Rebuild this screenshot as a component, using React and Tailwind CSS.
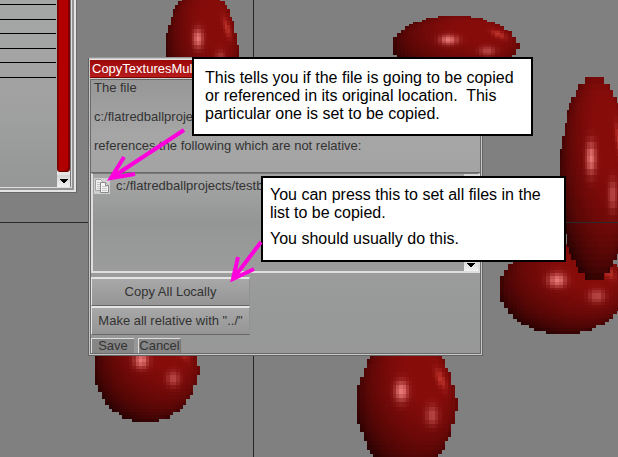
import React from "react";

const TEXELS = 31;

const glow = (x, y, cx, cy, sx, sy, tilt = 0) => {
  const dx = x - cx;
  const dy = y - cy;
  const a = dx * Math.cos(tilt) + dy * Math.sin(tilt);
  const b = -dx * Math.sin(tilt) + dy * Math.cos(tilt);
  return Math.exp(-(a * a) / (2 * sx * sx) - (b * b) / (2 * sy * sy));
};

const mix = (from, to, t) => from.map((c, i) => c + (to[i] - c) * t);

// Low resolution ball sprite: one coloured square per texel.
const sprite = [];
for (let row = 0; row < TEXELS; row++) {
  for (let col = 0; col < TEXELS; col++) {
    const u = (col + 0.5) / TEXELS;
    const v = (row + 0.5) / TEXELS;
    const x = (u - 0.485) / 0.485;
    const y = (v - 0.5) * 2;
    const r2 = x * x + y * y;
    const bump = col === TEXELS - 1 && row >= 14 && row <= 16;
    if (r2 > 1.01 && !bump) continue;
    const z = Math.sqrt(Math.max(0, 1 - r2));
    const light = Math.max(0, Math.min(1, 0.3 * x - 0.36 * y + 0.55 * z + 0.34));
    let c = mix([44, 2, 2], [134, 12, 10], light);
    c = mix(c, [188, 50, 42], glow(u, v, 0.83, 0.31, 0.06, 0.025, 1.05));
    c = mix(c, [184, 72, 70], glow(u, v, 0.745, 0.58, 0.042, 0.05));
    c = mix(c, [232, 120, 118], glow(u, v, 0.44, 0.4, 0.046, 0.052));
    sprite.push({ col, row, fill: `rgb(${c.map(Math.round).join(",")})` });
  }
}

const balls = [
  { x: 166, y: -11, w: 73, h: 124 },
  { x: 393, y: 16, w: 127, h: 60 },
  { x: 500, y: 244, w: 130, h: 90 },
  { x: 560, y: 77, w: 71, h: 203 },
  { x: 95, y: 319, w: 105, h: 103 },
  { x: 357, y: 338, w: 101, h: 133 },
];

function Scene() {
  return (
    <svg className="absolute inset-0 h-full w-full" shapeRendering="crispEdges" aria-hidden="true">
      {balls.map((b) => (
        <svg key={`${b.x}-${b.y}`} x={b.x} y={b.y} width={b.w} height={b.h} viewBox={`0 0 ${TEXELS} ${TEXELS}`} preserveAspectRatio="none">
          {sprite.map((t) => (
            <rect key={`${t.col}-${t.row}`} x={t.col} y={t.row} width="1" height="1" fill={t.fill} />
          ))}
        </svg>
      ))}
      <rect x="253" y="0" width="1" height="100%" fill="#262626" />
      <rect x="0" y="222" width="100%" height="1" fill="#2b2b2b" />
    </svg>
  );
}

function ArrowButton({ label, up = false }) {
  return (
    <button type="button" aria-label={label} className="flex h-3 w-full items-center justify-center bg-linear-to-b from-[#d4d4d4] to-[#f2f2f2]">
      <svg width="8" height="4" viewBox="0 0 8 4" shapeRendering="crispEdges" fill="#000">
        {up ? <path d="M3 0h2v1h1v1h1v1h1v1H0V3h1V2h1V1h1z" /> : <path d="M0 0h8v1H7v1H6v1H5v1H3V3H2V2H1V1H0z" />}
      </svg>
    </button>
  );
}

function PropertyWindow() {
  return (
    <section aria-label="Properties" className="absolute top-0 left-0 border-r border-b border-[#686868]">
      <div className="border-r-2 border-b-2 border-[#e4e4e4]">
        <div className="border-r-2 border-b-2 border-[#939393]">
          <div className="flex h-[188px] border-r border-b border-[#dedede] bg-linear-to-b from-[#a4a6a5] via-[#a2a2a2] to-[#949796]">
            <div className="w-14 pt-1">
              <div className="h-[15px] border-t border-black" />
              <div className="h-[14px] border-t border-black" />
              <div className="h-[15px] border-t border-black" />
              <div className="h-[14px] border-t border-black" />
              <div className="h-[15px] border-t border-black" />
              <div className="border-t border-black" />
            </div>
            <div className="ml-px flex w-[13px] flex-col">
              <div className="bg-[#e4e4e4]">
                <div className="h-[172px] rounded-b bg-linear-to-r from-[#690000] via-[#b40000] via-25% to-[#780000] shadow-[inset_0_-1px_0_#690000]">
                  <div className="mx-auto h-[170px] w-[9px] rounded-b bg-[#b20000]" />
                </div>
                <div className="h-[3px]" />
              </div>
              <ArrowButton label="Scroll properties down" />
            </div>
            <div className="w-px bg-[#777]" />
          </div>
        </div>
      </div>
    </section>
  );
}

function CopyIcon() {
  return (
    <svg width="16" height="16" viewBox="0 0 16 16" aria-hidden="true">
      <rect width="16" height="16" fill="#cfcfcf" />
      <path d="M1.500 1.500h5l2 2v9h-7z" fill="#ededed" stroke="#a2a2a2" />
      <path d="M3 4.500h3M3 6.500h3M3 8.500h3M3 10.500h3" stroke="#c4c4c4" />
      <path d="M6.500 4.500h5l3 3v7h-8z" fill="#f6f6f6" stroke="#8a8a8a" />
      <path d="M11.500 4.500v3h3" fill="#ddd" stroke="#8a8a8a" />
      <path d="M8 8.500h5M8 10.500h5M8 12.500h5" stroke="#c4c4c4" />
    </svg>
  );
}

function CopyDialog() {
  return (
    <section role="dialog" aria-labelledby="dialog-title" className="absolute top-[57px] left-[88px] w-[395px] border border-[#626262] border-t-[#969696] text-[13px] leading-[15px] text-[#333]">
      <div className="border border-[#c6c6c6]">
        <div className="border-t border-[#e4e4e4]">
          <h1 id="dialog-title" className="h-[18px] border-b border-[#760000] bg-linear-to-b from-[#9c0808] to-[#b81c1c] pt-px pl-0.5 text-white">
            CopyTexturesMul
          </h1>
          <div className="border-t border-[#d0d0d0]">
            <div className="border border-[#6a6a6a] bg-linear-to-b from-[#979797] via-[#a6a6a6] via-20% to-[#969998]">
              <div className="flex flex-col gap-[14px] pb-[19px] pl-[3px]">
                <p>The file</p>
                <p>c:/flatredballprojects/</p>
                <p>references the following which are not relative:</p>
              </div>
              <div className="border-t border-[#6a6a6a]">
                <div className="flex h-[100px] justify-between border-2 border-t border-[#dedede] border-t-[#777] bg-linear-to-b from-[#a6a6a6] via-[#949696] via-50% to-[#9c9c9c] pt-1">
                  <ul>
                    <li className="flex gap-1.5 pl-px">
                      <button type="button" aria-label="File will be copied">
                        <CopyIcon />
                      </button>
                      <span>c:/flatredballprojects/testb</span>
                    </li>
                  </ul>
                  <div className="-mt-1 flex w-[14px] flex-col justify-between">
                    <ArrowButton label="Scroll files up" up />
                    <ArrowButton label="Scroll files down" />
                  </div>
                </div>
              </div>
              <div className="bg-linear-to-b from-[#9c9c9c] via-[#969998] to-[#979797] pt-1">
                <div className="flex w-[159px] flex-col">
                  <button type="button" className="h-[29px] border border-t-2 border-[#e4e4e4] border-r-[#929292] border-b-[#666] bg-linear-to-b from-[#a8a8a8] to-[#959595] pb-0.5">
                    Copy All Locally
                  </button>
                  <button type="button" className="h-[29px] border border-t-2 border-[#e4e4e4] border-r-[#929292] border-b-[#666] bg-linear-to-b from-[#a8a8a8] to-[#959595] pb-0.5">
                    Make all relative with "../"
                  </button>
                </div>
                <div className="flex gap-1 pt-[3px]">
                  <button type="button" className="h-[15px] w-[43px] border border-r-0 border-b-0 border-[#ddd] bg-[#868686] leading-[14px]">
                    Save
                  </button>
                  <button type="button" className="h-[15px] w-[43px] border border-b-0 border-[#ddd] border-r-[#777] bg-[#868686] leading-[14px]">
                    Cancel
                  </button>
                </div>
              </div>
            </div>
          </div>
        </div>
      </div>
    </section>
  );
}

function Notes() {
  return (
    <>
      <aside className="absolute top-[57px] left-[192px] h-[79px] w-[341px] border-2 border-black bg-white px-[11px] pt-[10px] text-[16px] leading-[18px] whitespace-pre text-black">
        <p>
          {"This tells you if the file is going to be copied\nor referenced in its original location.  This\nparticular one is set to be copied."}
        </p>
      </aside>
      <aside className="absolute top-[176px] left-[261px] flex h-[86px] w-[305px] flex-col gap-2 border-2 border-black bg-white px-[7px] pt-2 text-[16px] leading-[18px] whitespace-pre text-black">
        <p>{"You can press this to set all files in the\nlist to be copied."}</p>
        <p>You should usually do this.</p>
      </aside>
      <svg className="pointer-events-none absolute inset-0 h-full w-full" fill="none" stroke="#ff00dc" strokeWidth="4" aria-hidden="true">
        <path d="M184 130L111 178M124 157L111 178L135 174" />
        <path d="M261 242L233 279M238 257L233 279L254 269" />
      </svg>
    </>
  );
}

export default function App() {
  return (
    <main className="relative h-screen w-full overflow-hidden bg-[#808080] font-['Liberation_Sans',Arial,sans-serif]">
      <Scene />
      <PropertyWindow />
      <CopyDialog />
      <Notes />
    </main>
  );
}
